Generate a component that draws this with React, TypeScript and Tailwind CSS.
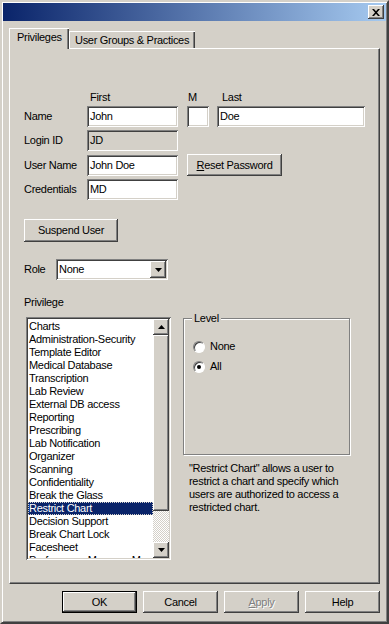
import * as React from 'react';

const privileges = [
    'Charts',
    'Administration-Security',
    'Template Editor',
    'Medical Database',
    'Transcription',
    'Lab Review',
    'External DB access',
    'Reporting',
    'Prescribing',
    'Lab Notification',
    'Organizer',
    'Scanning',
    'Confidentiality',
    'Break the Glass',
    'Restrict Chart',
    'Decision Support',
    'Break Chart Lock',
    'Facesheet',
    'Preferences Manager Menu',
];

const sunken =
    'shadow-[inset_1px_1px_#808080,inset_-1px_-1px_#ffffff,inset_2px_2px_#404040,inset_-2px_-2px_#d4d0c8]';
const raised = 'bg-[#d4d0c8] shadow-[inset_-1px_-1px_#404040,inset_1px_1px_#ffffff,inset_-2px_-2px_#808080]';

function Field({ value, className = '', disabled = false }: { value?: string; className?: string; disabled?: boolean }) {
    return (
        <div
            className={`flex h-[21px] items-center pl-[3px] ${sunken} ${disabled ? 'bg-[#d4d0c8]' : 'bg-white'} ${className}`}
        >
            {value}
        </div>
    );
}

function Button({ children, className = '' }: { children: React.ReactNode; className?: string }) {
    return <div className={`flex items-center justify-center ${raised} ${className}`}>{children}</div>;
}

function Arrow({ up = false }: { up?: boolean }) {
    return (
        <svg width="7" height="4" viewBox="0 0 7 4">
            <path d={up ? 'M3.5 0L7 4H0Z' : 'M0 0H7L3.5 4Z'} fill="#000" />
        </svg>
    );
}

function Radio({ checked, label }: { checked?: boolean; label: string }) {
    return (
        <div className="flex h-[13px] items-center">
            <div className="flex h-3 w-3 items-center justify-center rounded-full border border-[#808080] border-b-white border-r-white bg-white shadow-[inset_1px_1px_#404040]">
                {checked && <div className="h-1 w-1 rounded-full bg-black" />}
            </div>
            <span className="ml-[5px]">{label}</span>
        </div>
    );
}

export default function App() {
    return (
        <div className="h-[624px] w-[389px] border-2 border-[#d4d0c8] border-b-[#404040] border-r-[#404040] bg-[#d4d0c8] p-[1px] font-['Liberation_Sans',Arial,sans-serif] text-[11px] leading-[13px] tracking-[-0.3px] text-black shadow-[inset_1px_1px_#ffffff,inset_-1px_-1px_#808080]">
            {/* title bar */}
            <div className="flex h-[18px] justify-end bg-[linear-gradient(to_right,#0a246a,#a6caf0)] pr-[2px] pt-[2px]">
                <Button className="h-[14px] w-[16px]">
                    <svg width="8" height="7" viewBox="0 0 8 7">
                        <path d="M0 0h2l2 2.3L6 0h2L5 3.5 8 7H6L4 4.7 2 7H0l3-3.5z" fill="#000" />
                    </svg>
                </Button>
            </div>

            <div className="px-[6px]">
                {/* tabs */}
                <div className="mt-[7px] flex items-start">
                    <div className="relative z-10 -mb-[1px] h-[21px] w-[60px] border-l border-t border-white bg-[#d4d0c8] pl-[7px] pt-[2px] shadow-[inset_-1px_0_#404040,inset_-2px_0_#808080]">
                        Privileges
                    </div>
                    <div className="mt-[3px] h-[17px] w-[126px] border-l border-t border-white pl-[5px] pt-[2px] shadow-[inset_-1px_0_#404040,inset_-2px_0_#808080]">
                        User Groups &amp; Practices
                    </div>
                </div>

                {/* panel */}
                <div className="h-[536px] border-l border-t border-white border-r border-r-[#404040] border-b border-b-[#404040] shadow-[inset_-1px_-1px_#808080]">
                    <div className="mt-[42px] flex pl-[80px]">
                        <span className="w-[98px]">First</span>
                        <span className="w-[34px]">M</span>
                        <span>Last</span>
                    </div>

                    <div className="mt-[2px] flex items-center pl-[14px]">
                        <span className="w-[63px]">Name</span>
                        <Field value="John" className="w-[91px]" />
                        <Field className="ml-[9px] w-[22px]" />
                        <Field value="Doe" className="ml-[8px] w-[148px]" />
                    </div>

                    <div className="mt-[3px] flex items-center pl-[14px]">
                        <span className="w-[63px]">Login ID</span>
                        <Field value="JD" className="w-[91px]" disabled />
                    </div>

                    <div className="mt-[3px] flex items-center pl-[14px]">
                        <span className="w-[63px]">User Name</span>
                        <Field value="John Doe" className="w-[91px]" />
                        <Button className="ml-[9px] h-[22px] w-[95px]">
                            <span>
                                <span className="underline">R</span>eset Password
                            </span>
                        </Button>
                    </div>

                    <div className="mt-[3px] flex items-center pl-[14px]">
                        <span className="w-[63px]">Credentials</span>
                        <Field value="MD" className="w-[91px]" />
                    </div>

                    <div className="mt-[19px] pl-[14px]">
                        <Button className="h-[23px] w-[94px]">Suspend User</Button>
                    </div>

                    <div className="mt-[17px] flex items-center pl-[14px]">
                        <span className="w-[32px]">Role</span>
                        <div className={`flex h-[21px] w-[112px] items-center bg-white p-[2px] ${sunken}`}>
                            <span className="flex-1 pl-[1px]">None</span>
                            <Button className="h-[17px] w-[16px]">
                                <Arrow />
                            </Button>
                        </div>
                    </div>

                    <div className="mt-[16px] pl-[14px]">Privilege</div>

                    <div className="mt-[8px] flex items-start pl-[16px]">
                        {/* list box */}
                        <div className={`flex h-[243px] w-[145px] bg-white p-[2px] ${sunken}`}>
                            <div className="flex-1 overflow-hidden pt-[1px]">
                                {privileges.map((item) => (
                                    <div
                                        key={item}
                                        className={`h-[13px] whitespace-nowrap pl-[1px] ${
                                            item === 'Restrict Chart'
                                                ? 'bg-[#0a246a] text-white outline-1 -outline-offset-1 outline-dotted outline-[#d4d0c8]'
                                                : ''
                                        }`}
                                    >
                                        {item}
                                    </div>
                                ))}
                            </div>
                            <div className="flex w-[16px] flex-col">
                                <Button className="h-[16px]">
                                    <Arrow up />
                                </Button>
                                <div className={`h-[176px] ${raised}`} />
                                <div className="flex-1 bg-[conic-gradient(#ffffff_25%,#d4d0c8_0_50%,#ffffff_0_75%,#d4d0c8_0)] bg-[length:2px_2px]" />
                                <Button className="h-[16px]">
                                    <Arrow />
                                </Button>
                            </div>
                        </div>

                        {/* level group */}
                        <div className="ml-[12px] mt-[1px] w-[167px]">
                            <div className="relative h-[137px] border border-[#808080] shadow-[inset_1px_1px_#ffffff,1px_1px_#ffffff]">
                                <span className="absolute -top-[7px] left-[8px] bg-[#d4d0c8] px-[2px]">Level</span>
                                <div className="ml-[9px] mt-[21px] flex flex-col gap-[7px]">
                                    <Radio label="None" />
                                    <Radio label="All" checked />
                                </div>
                            </div>
                            <p className="ml-[6px] mt-[7px] leading-[13px]">
                                "Restrict Chart" allows a user to
                                <br />
                                restrict a chart and specify which
                                <br />
                                users are authorized to access a
                                <br />
                                restricted chart.
                            </p>
                        </div>
                    </div>
                </div>

                {/* dialog buttons */}
                <div className="mt-[7px] flex justify-end gap-[6px]">
                    <div className="h-[22px] w-[75px] border border-black">
                        <Button className="h-full w-full">OK</Button>
                    </div>
                    <Button className="h-[22px] w-[75px]">Cancel</Button>
                    <Button className="h-[22px] w-[75px] text-[#808080] [text-shadow:1px_1px_#ffffff]">
                        <span>
                            <span className="underline">A</span>pply
                        </span>
                    </Button>
                    <Button className="h-[22px] w-[75px]">Help</Button>
                </div>
            </div>
        </div>
    );
}
